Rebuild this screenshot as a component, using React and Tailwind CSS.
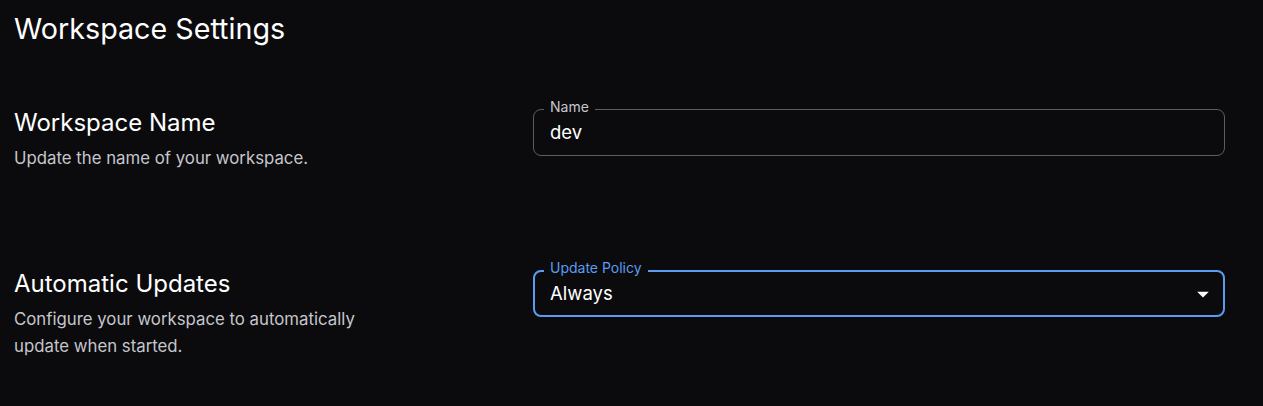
const font = { fontFamily: 'Inter, "Noto Sans", sans-serif' };

function OutlinedField({ label, value, focused, select }) {
  return (
    <div className="relative">
      <div
        className={`flex h-[47px] items-center rounded-lg px-4 ${
          focused ? 'border-2 border-[#5b9cf2]' : 'border border-[#5c5c62]'
        }`}
      >
        <span className={`flex-1 text-[18.5px] text-white ${focused ? '-ml-px' : ''}`}>{value}</span>
        {select && (
          <svg width="28" height="28" viewBox="0 0 24 24" className="mr-[-10px] fill-white">
            <path d="M7 10l5 5 5-5z" />
          </svg>
        )}
      </div>
      <label
        className={`absolute left-[11px] top-[-10px] bg-[#0b0b0d] px-[6px] text-[14px] leading-[16px] ${
          focused ? 'text-[#5b9cf2]' : 'text-[#c6c6cc]'
        }`}
      >
        {label}
      </label>
    </div>
  );
}

function SettingRow({ title, description, children, className }) {
  return (
    <div className={`flex items-start ${className}`}>
      <div className="-mt-px w-[519px] shrink-0">
        <h2 className="text-[24px] leading-[29px] text-white">{title}</h2>
        <p className="mt-[8px] max-w-[370px] text-[16.8px] leading-[27px] text-[#c6c6cc]">{description}</p>
      </div>
      <div className="w-[692px]">{children}</div>
    </div>
  );
}

export default function App() {
  return (
    <div className="min-h-[406px] bg-[#0b0b0d] pl-[14px]" style={font}>
      <div className="pt-[12px]">
        <h1 className="text-[28.7px] leading-[34px] text-white">Workspace Settings</h1>
      </div>

      <SettingRow
        className="mt-[63px]"
        title="Workspace Name"
        description="Update the name of your workspace."
      >
        <OutlinedField label="Name" value="dev" />
      </SettingRow>

      <SettingRow
        className="mt-[98px]"
        title="Automatic Updates"
        description="Configure your workspace to automatically update when started."
      >
        <OutlinedField label="Update Policy" value="Always" focused select />
      </SettingRow>
    </div>
  );
}
